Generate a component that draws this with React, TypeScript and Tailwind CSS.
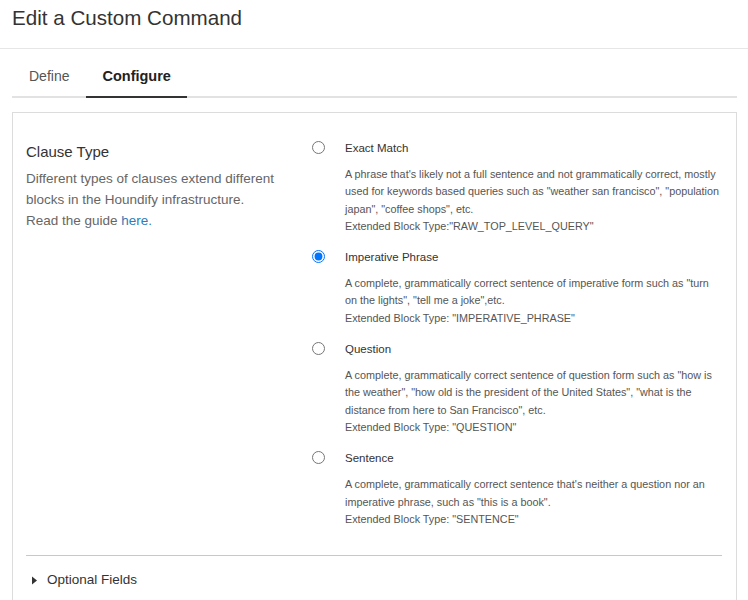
import React from "react";

type Clause = {
  label: string;
  lines: string[];
  checked?: boolean;
};

const clauses: Clause[] = [
  {
    label: "Exact Match",
    lines: [
      "A phrase that's likely not a full sentence and not grammatically correct, mostly",
      "used for keywords based queries such as \"weather san francisco\", \"population",
      "japan\", \"coffee shops\", etc.",
      "Extended Block Type:\"RAW_TOP_LEVEL_QUERY\"",
    ],
  },
  {
    label: "Imperative Phrase",
    checked: true,
    lines: [
      "A complete, grammatically correct sentence of imperative form such as \"turn",
      "on the lights\", \"tell me a joke\",etc.",
      "Extended Block Type: \"IMPERATIVE_PHRASE\"",
    ],
  },
  {
    label: "Question",
    lines: [
      "A complete, grammatically correct sentence of question form such as \"how is",
      "the weather\", \"how old is the president of the United States\", \"what is the",
      "distance from here to San Francisco\", etc.",
      "Extended Block Type: \"QUESTION\"",
    ],
  },
  {
    label: "Sentence",
    lines: [
      "A complete, grammatically correct sentence that's neither a question nor an",
      "imperative phrase, such as \"this is a book\".",
      "Extended Block Type: \"SENTENCE\"",
    ],
  },
];

function ClauseOption({ clause }: { clause: Clause }) {
  return (
    <div className="flex mb-[13px]">
      <div className="w-[33px] flex justify-start pt-[2px]">
        <input
          type="radio"
          name="clause"
          readOnly
          checked={!!clause.checked}
          className="m-0 w-[13px] h-[13px]"
        />
      </div>
      <div className="flex-1">
        <div className="text-[11.5px] leading-[18px] text-[#333]">{clause.label}</div>
        <div className="mt-[9px] text-[10.8px] leading-[17.3px] text-[#555] whitespace-nowrap">
          {clause.lines.map((l, i) => (
            <div key={i}>{l}</div>
          ))}
        </div>
      </div>
    </div>
  );
}

export default function App() {
  return (
    <div
      className="w-[748px] h-[600px] overflow-hidden bg-white"
      style={{ fontFamily: '"Liberation Sans", Arial, sans-serif' }}
    >
      <div className="h-[49px] border-b border-[#e6e6e6] px-[12px] pt-[6px]">
        <h1 className="text-[20.6px] leading-[24px] text-[#333]">Edit a Custom Command</h1>
      </div>

      <div className="mx-[12px] mr-[11px] flex border-b-2 border-[#e2e2e2] h-[49px]">
        <div className="px-[17px] pt-[8px] flex items-center text-[14px] text-[#555]">Define</div>
        <div className="px-[16px] pt-[8px] flex items-center text-[14.5px] font-bold text-[#222] border-b-2 border-[#333] -mb-[2px]">
          Configure
        </div>
      </div>

      <div className="mt-[14px] mx-[12px] mr-[11px] border border-[#dcdcdc] pl-[13px] pr-[14px] pt-[26px] h-[600px]">
        <div className="flex">
          <div className="w-[286px] pt-[2px]">
            <div className="text-[15px] leading-[22px] text-[#333]">Clause Type</div>
            <p className="mt-[5px] text-[13.5px] leading-[21px] text-[#666]">
              Different types of clauses extend different
              <br />
              blocks in the Houndify infrastructure.
              <br />
              Read the guide <span className="text-[#337ab7]">here.</span>
            </p>
          </div>
          <div className="flex-1">
            {clauses.map((c) => (
              <ClauseOption key={c.label} clause={c} />
            ))}
          </div>
        </div>

        <div className="mt-[14px] border-t border-[#c8c8c8]" />
        <div className="flex items-center h-[48px] pl-[5px] text-[13.5px] text-[#333]">
          <svg width="8" height="9" viewBox="0 0 8 9" className="mr-[8px]">
            <path d="M1 0.5 L6 4.5 L1 8.5 Z" fill="#333" />
          </svg>
          Optional Fields
        </div>
      </div>
    </div>
  );
}
